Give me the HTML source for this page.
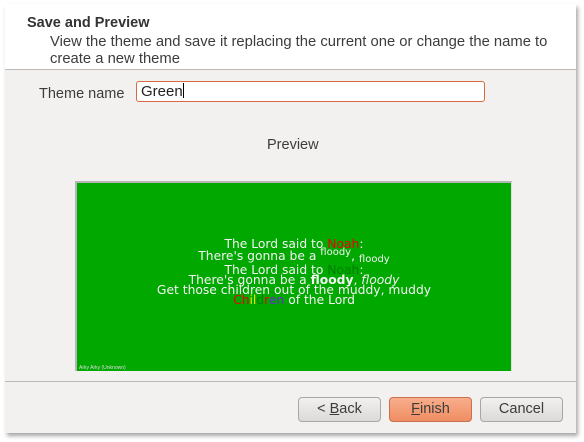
<!DOCTYPE html>
<html><head><meta charset="utf-8"><style>
*{margin:0;padding:0;box-sizing:border-box}
body{width:584px;height:442px;background:#fff;position:relative;overflow:hidden;font-family:"Liberation Sans","DejaVu Sans",sans-serif;color:#3c3c3c}
#win{position:absolute;left:5px;top:4px;width:571px;height:429px;background:#f2f1f0;box-shadow:2px 3px 4px rgba(0,0,0,.35);}
#hdr{position:absolute;left:0;top:0;width:571px;height:66px;background:#fff;border-bottom:1px solid #bdbab6}
.t{position:absolute;white-space:nowrap}
.btn{position:absolute;top:393px;height:25px;width:83px;border:1px solid #a9a7a4;border-radius:4px;background:linear-gradient(#f2f1f0,#dcdad7);font-size:14.5px;text-align:center;line-height:23px;color:#3c3c3c}
#prev{position:absolute;left:70px;top:177px;width:437px;height:190px;background:#00a800;border-top:2px solid #b5b5b5;border-left:2px solid #b5b5b5;border-right:1px solid #ddd}
.l{position:absolute;left:0;width:100%;text-align:center;color:#f4f4f4;font-size:12.3px;white-space:nowrap;font-family:"DejaVu Sans",sans-serif;line-height:12px}
</style></head><body>
<div id="win">
 <div id="hdr">
  <div class="t" style="left:22px;top:11px;font-weight:bold;font-size:14.5px;color:#333">Save and Preview</div>
  <div class="t" style="left:45px;top:30px;font-size:14.8px;line-height:17px;color:#3c3c3c">View the theme and save it replacing the current one or change the name to<br>create a new theme</div>
 </div>
 <div class="t" style="left:34px;top:82px;font-size:14.5px">Theme name</div>
 <div style="position:absolute;left:131px;top:77px;width:349px;height:21px;border:1px solid #d86a3f;border-radius:3px;background:#fff;font-size:15px;padding-left:4px;line-height:19px;color:#222">Green<span style="display:inline-block;width:1px;height:15px;background:#000;vertical-align:-2px"></span></div>
 <div class="t" style="left:262px;top:133px;font-size:14.5px">Preview</div>
 <div id="prev">
  <div class="l" style="top:55px">The Lord said to <span style="color:#e00">Noah</span>:</div>
  <div class="l" style="top:67px">There's gonna be a <span style="font-size:10px;position:relative;top:-5px">floody</span>, <span style="font-size:10px;position:relative;top:2px">floody</span></div>
  <div class="l" style="top:81px">The Lord said to <span style="color:#007f00">Noah</span>:</div>
  <div class="l" style="top:91px">There's gonna be a <b>floody</b>, <i>floody</i></div>
  <div class="l" style="top:101px">Get those children out of the muddy, muddy</div>
  <div class="l" style="top:111px"><span style="color:#e00">Ch</span><span style="color:#e8e800">il</span><span style="color:#008000">d</span><span style="color:#e00">r</span><span style="color:#6a2bd6">en</span> of the Lord</div>
  <div style="position:absolute;left:2px;bottom:0;font-size:5px;color:#ddd">Arky Arky (Unknown)</div>
 </div>
 <div style="position:absolute;left:0;top:377px;width:571px;height:1px;background:#bdbab6"></div>
 <div class="btn" style="left:293px">&lt; <u>B</u>ack</div>
 <div class="btn" style="left:384px;border-color:#c8714c;background:linear-gradient(#f8ad8b,#ef8e63)"><u>F</u>inish</div>
 <div class="btn" style="left:475px">Cancel</div>
</div>
</body></html>
